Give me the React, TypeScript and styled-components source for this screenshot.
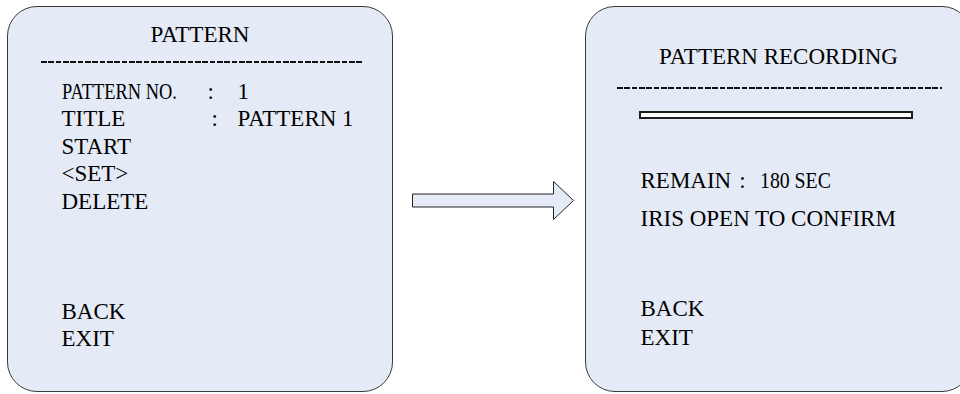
import React from 'react';
import styled, { createGlobalStyle } from 'styled-components';

const GlobalStyle = createGlobalStyle`
  html, body {
    margin: 0;
    padding: 0;
    background: #ffffff;
    overflow: hidden;
  }
  body {
    font-family: 'Liberation Serif', 'Times New Roman', serif;
  }
`;

const Page = styled.div`
  width: 960px;
  height: 394px;
  overflow: hidden;
  box-sizing: border-box;
  padding: 6px 0 0 7px;
  display: flex;
  align-items: flex-start;
`;

const Screen = styled.div<{ $w: number }>`
  flex: 0 0 auto;
  box-sizing: border-box;
  width: ${({ $w }) => $w}px;
  height: 386px;
  background: #e5ebf6;
  border: 1.5px solid #3a3a3a;
  border-radius: 30px;
  display: flex;
  flex-direction: column;
  color: #000;
  font-size: 23px;
`;

const Title = styled.div<{ $mt: number }>`
  margin-top: ${({ $mt }) => $mt}px;
  height: 28px;
  line-height: 28px;
  text-align: center;
  white-space: nowrap;
`;

const Divider = styled.div<{ $mt: number; $inset: number; $w: number }>`
  margin-top: ${({ $mt }) => $mt}px;
  margin-left: ${({ $inset }) => $inset}px;
  width: ${({ $w }) => $w}px;
  height: 2px;
  background: repeating-linear-gradient(
    to right,
    #111 0,
    #111 5.8px,
    transparent 5.8px,
    transparent 7.33px
  );
`;

const Menu = styled.div<{ $mt: number; $pl: number }>`
  margin-top: ${({ $mt }) => $mt}px;
  padding-left: ${({ $pl }) => $pl}px;
  display: flex;
  flex-direction: column;
`;

const Line = styled.div<{ $lh?: number; $mt?: number }>`
  margin-top: ${({ $mt }) => $mt ?? 0}px;
  height: ${({ $lh }) => $lh ?? 27.5}px;
  line-height: ${({ $lh }) => $lh ?? 27.5}px;
  white-space: nowrap;
`;

const FieldRow = styled.div`
  display: grid;
  grid-template-columns: 146px 30px auto;
  height: 27.5px;
  line-height: 27.5px;
  white-space: nowrap;
`;

// condensed runs of text, as in the original OSD sheet
const Label = styled.span<{ $scale?: number }>`
  display: inline-block;
  transform: scaleX(${({ $scale }) => $scale ?? 1});
  transform-origin: left center;
`;

const Colon = styled.span<{ $ml?: number; $mr?: number }>`
  margin-left: ${({ $ml }) => $ml ?? 0}px;
  margin-right: ${({ $mr }) => $mr ?? 0}px;
`;

const ProgressBar = styled.div`
  box-sizing: border-box;
  margin-top: 22px;
  margin-left: 52.5px;
  width: 274px;
  height: 8px;
  border: 2px solid #1e1e1e;
  background: #ffffff;
`;

const ArrowSlot = styled.div`
  flex: 0 0 192px;
  align-self: center;
  box-sizing: border-box;
  padding-left: 18.5px;
  display: flex;
  align-items: center;
`;

const Arrow = () => (
  <svg width="163" height="39" viewBox="0 0 163 39">
    <polygon
      points="0.5,13 141.5,13 141.5,0.5 161.5,19.5 141.5,38.5 141.5,26 0.5,26"
      fill="#e5ebf6"
      stroke="#222"
      strokeWidth="1"
    />
  </svg>
);

const App: React.FC = () => {
  return (
    <>
      <GlobalStyle />
      <Page>
        <Screen $w={386}>
          <Title $mt={13.7}>PATTERN</Title>
          <Divider $mt={12.5} $inset={32.5} $w={322} />
          <Menu $mt={14.5} $pl={53.5}>
            <FieldRow>
              <Label $scale={0.8}>PATTERN NO.</Label>
              <Colon>:</Colon>
              <span>1</span>
            </FieldRow>
            <FieldRow>
              <Label>TITLE</Label>
              <Colon $ml={4}>:</Colon>
              <span>PATTERN 1</span>
            </FieldRow>
            <Line>START</Line>
            <Line>&lt;SET&gt;</Line>
            <Line>DELETE</Line>
            <Line $mt={82.8} $lh={27}>BACK</Line>
            <Line $lh={27}>EXIT</Line>
          </Menu>
        </Screen>

        <ArrowSlot>
          <Arrow />
        </ArrowSlot>

        <Screen $w={387}>
          <Title $mt={35.7}>PATTERN RECORDING</Title>
          <Divider $mt={16.5} $inset={30.5} $w={325} />
          <ProgressBar />
          <Menu $mt={0} $pl={54.5}>
            <Line $mt={47.5}>
              REMAIN<Colon $ml={8} $mr={14}>:</Colon>
              <Label $scale={0.86}>180 SEC</Label>
            </Line>
            <Line $mt={10.5}>IRIS OPEN TO CONFIRM</Line>
            <Line $mt={61.8} $lh={29}>BACK</Line>
            <Line $lh={29}>EXIT</Line>
          </Menu>
        </Screen>
      </Page>
    </>
  );
};

export default App;
